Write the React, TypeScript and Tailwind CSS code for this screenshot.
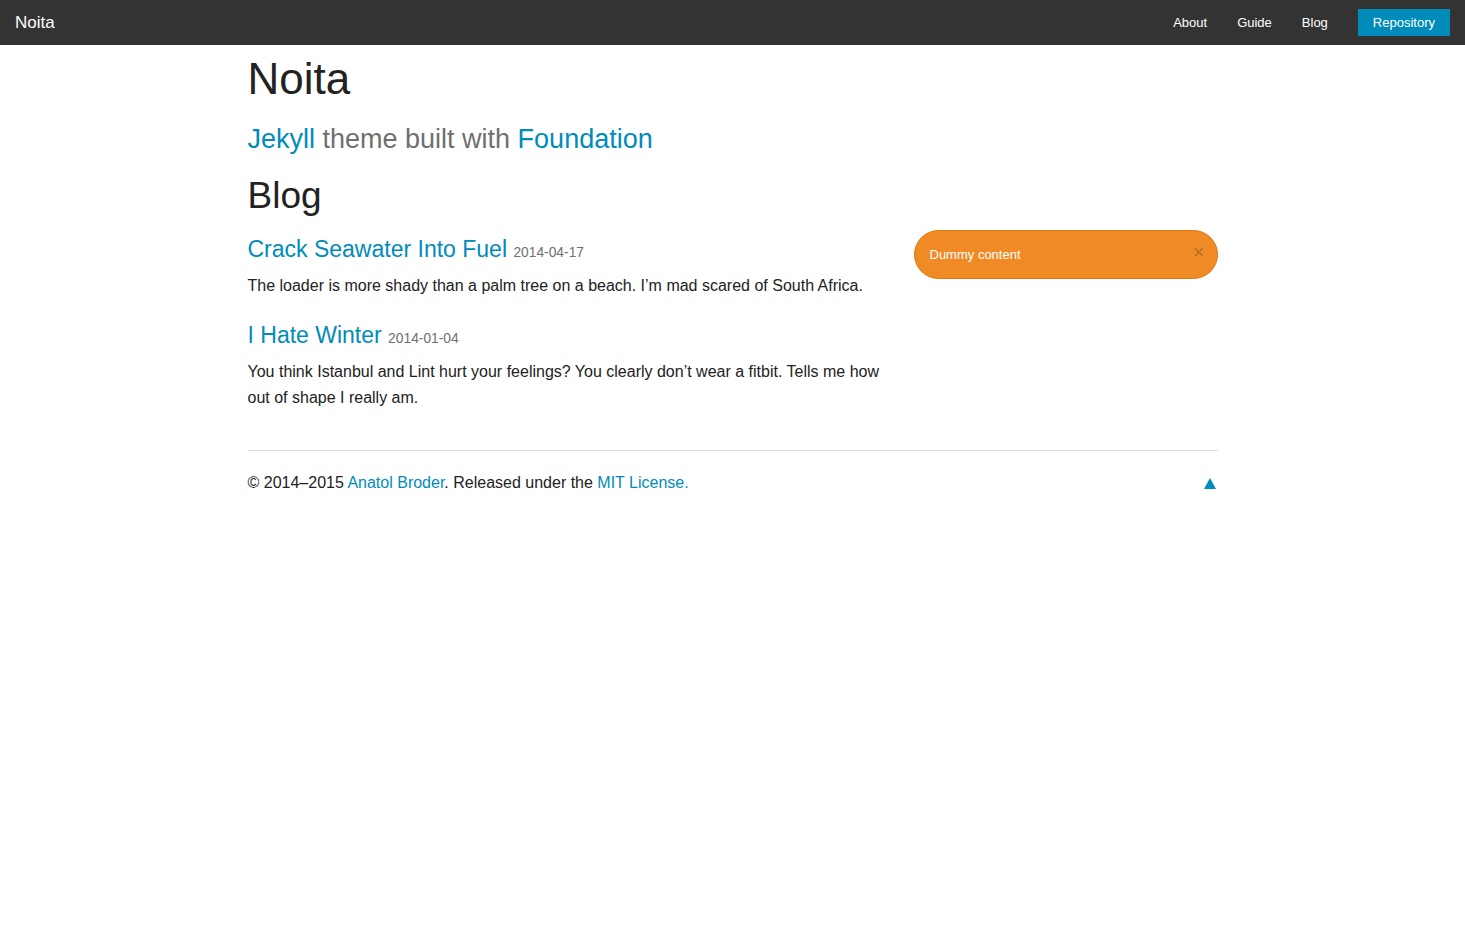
import React from "react";

const font = { fontFamily: '"Liberation Sans", Arial, Helvetica, sans-serif' };

export default function App() {
  return (
    <div className="min-h-[930px] bg-white text-[#222222]" style={font}>
      <nav className="flex h-[45px] items-center justify-between bg-[#333333]">
        <a className="pl-[15px] text-[17px] leading-[45px] text-white">Noita</a>
        <ul className="flex items-center">
          <li><a className="block px-[15px] text-[13px] leading-[45px] text-white">About</a></li>
          <li><a className="block px-[15px] text-[13px] leading-[45px] text-white">Guide</a></li>
          <li><a className="block px-[15px] text-[13px] leading-[45px] text-white">Blog</a></li>
          <li className="px-[15px]">
            <a className="flex h-[27px] items-center bg-[#008cba] px-[15px] text-[13px] text-white">Repository</a>
          </li>
        </ul>
      </nav>

      <div className="mx-auto w-[970px]">
        <h1 className="mt-[3px] mb-[11px] text-[44px] leading-[1.4]">Noita</h1>
        <h3 className="text-[27px] leading-[1.4] text-[#6f6f6f]">
          <a className="text-[#008cba]">Jekyll</a> theme built with <a className="text-[#008cba]">Foundation</a>
        </h3>
        <h2 className="mt-[12px] text-[37px] leading-[1.4]">Blog</h2>

        <div className="mt-[8px] flex">
          <div className="w-[637px]">
            <h4 className="mt-[3px] mb-[8px] text-[23px] leading-[1.4] text-[#008cba]">
              <a>Crack Seawater Into Fuel</a> <small className="text-[13.8px] text-[#6f6f6f]">2014-04-17</small>
            </h4>
            <p className="mb-[20px] text-[16px] leading-[1.6]">
              The loader is more shady than a palm tree on a beach. I’m mad scared of South Africa.
            </p>
            <h4 className="mt-[1px] mb-[8px] text-[23px] leading-[1.4] text-[#008cba]">
              <a>I Hate Winter</a> <small className="text-[13.8px] text-[#6f6f6f]">2014-01-04</small>
            </h4>
            <p className="mb-[20px] text-[16px] leading-[1.6]">
              You think Istanbul and Lint hurt your feelings? You clearly don’t wear a fitbit. Tells me how out of shape I really am.
            </p>
          </div>
          <div className="ml-[29px] w-[304px]">
            <div className="relative flex h-[49px] items-center rounded-full border border-[#de770f] bg-[#f08a24] pl-[15px] text-[13px] text-white">
              Dummy content
              <span className="absolute right-[12px] top-[10px] text-[20px] leading-[22px] text-[#333333] opacity-30">×</span>
            </div>
          </div>
        </div>

        <hr className="mt-[20px] border-0 border-t border-[#dddddd]" />
        <div className="mt-[19px] flex items-center justify-between">
          <p className="text-[16px] leading-[1.6]">
            © 2014–2015 <a className="text-[#008cba]">Anatol Broder</a>. Released under the <a className="text-[#008cba]">MIT License.</a>
          </p>
          <svg width="12" height="11" viewBox="0 0 12 11" className="mr-[2px] mt-[1px]">
            <polygon points="6,0 12,11 0,11" fill="#008cba" />
          </svg>
        </div>
      </div>
    </div>
  );
}
